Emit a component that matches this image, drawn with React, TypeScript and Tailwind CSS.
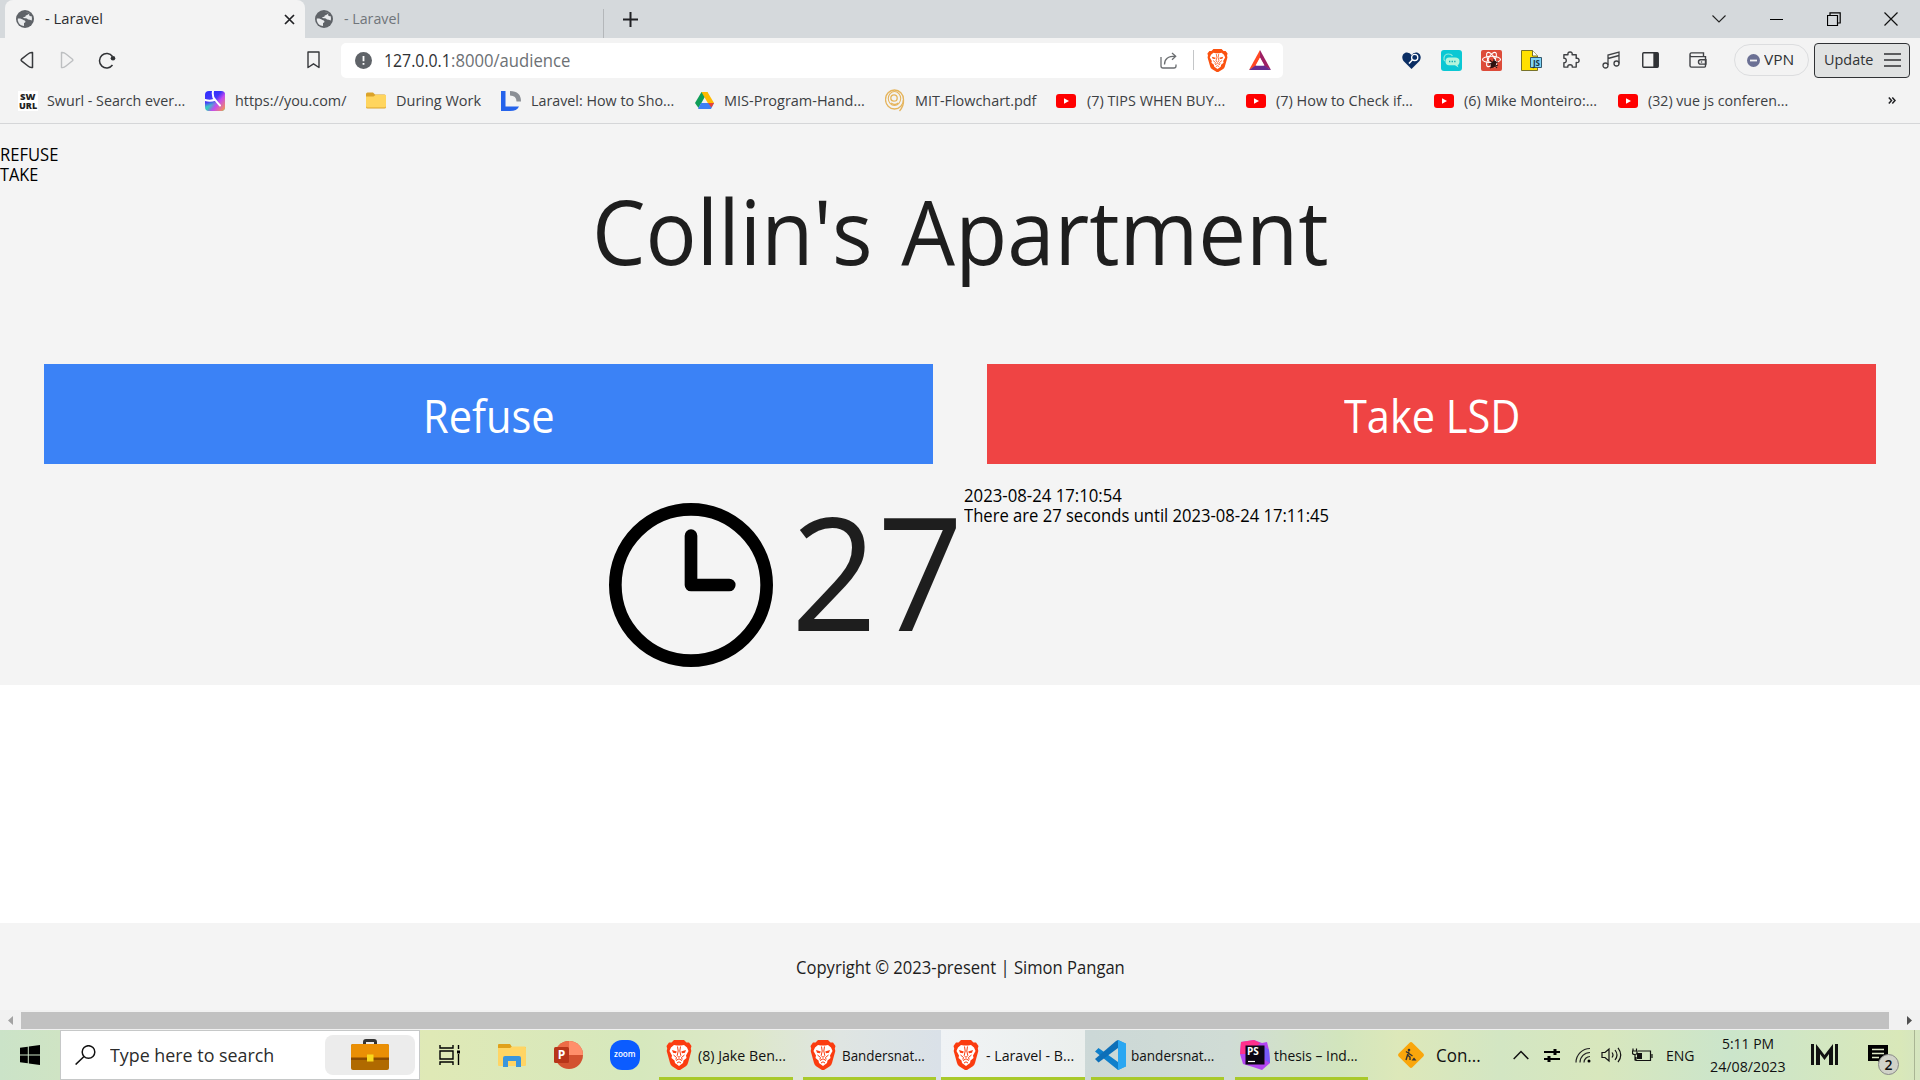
import { useLayoutEffect, useRef, useState, type ReactNode } from 'react';

/** Single line of text that is condensed or widened to the width of its box. */
function Fit({ className, children }: { className: string; children: string }) {
  const box = useRef<HTMLSpanElement>(null);
  const text = useRef<HTMLSpanElement>(null);
  const [scale, setScale] = useState(1);
  useLayoutEffect(() => {
    if (box.current && text.current) setScale(box.current.offsetWidth / text.current.offsetWidth);
  }, []);
  return (
    <span ref={box} className={`block shrink-0 whitespace-nowrap ${className}`}>
      <span ref={text} className="inline-block origin-left" style={{ transform: `scaleX(${scale})` }}>
        {children}
      </span>
    </span>
  );
}

function Svg({ className, box = '0 0 24 24', children }: { className: string; box?: string; children: ReactNode }) {
  return (
    <svg className={`block shrink-0 ${className}`} viewBox={box} preserveAspectRatio="none" fill="none" stroke="none">
      {children}
    </svg>
  );
}

function Brave({ className }: { className: string }) {
  return (
    <Svg className={className} box="0 0 26 30">
      <path d="M8 0H18L20.500 2.500H23L25.500 6L24.800 8.500L25.300 11L22 23Q21.500 25 19.500 26.500L14 30H12L6.500 26.500Q4.500 25 4 23L.7 11L1.200 8.500L.5 6L3 2.500H5.500Z" fill="currentColor" />
      <path d="M8 5L11 5.600H15L18 5L21 7.500L22.500 11L20 15.500L20.500 18L17.500 20.500L17 23L13 26L9 23L8.500 20.500L5.500 18L6 15.500L3.500 11L5 7.500Z" fill="#fff" />
      <path d="M6 10L10.800 11.500L10 13.200L7 12.800ZM20 10L15.200 11.500L16 13.200L19 12.800Z" fill="currentColor" />
      <path d="M11.500 6.500L12.200 11L11.200 15.500L13 17.500L14.800 15.500L13.800 11L14.500 6.500M7.500 15L10.500 17.500L9.800 19.500M18.500 15L15.500 17.500L16.200 19.500M10 20.500L13 18.800L16 20.500M11 23L13 21.800L15 23" stroke="currentColor" strokeWidth="1" />
    </Svg>
  );
}

function Globe({ className }: { className: string }) {
  return (
    <Svg className={className} box="0 0 18 18">
      <circle cx="9" cy="9" r="9" fill="#5f6368" />
      <path d="M1.800 8.500C4 8.200 6.500 9 7.500 10Q9 10 9.500 11.500Q9.500 12.800 8 13V16Q3 15.500 1.800 10.500Z" fill="#e9ebed" />
      <path d="M9.500 1.900Q12 2.200 13.500 3.300Q12 5 10.500 5.200Q9.500 5.300 9.500 6.500Q8.500 7 7 7.200Q7.500 8.300 9 8.200Q11 8 12 9.500Q13.500 9.500 15.800 10.500Q16.500 8.500 15.500 6Q13.500 6.500 13 5L13.500 3.300Q11.500 1.900 9.500 1.900Z" fill="#e9ebed" />
    </Svg>
  );
}

function YouTube({ className = '' }: { className?: string }) {
  return (
    <Svg className={`h-[14px] w-5 ${className}`} box="0 0 20 14">
      <rect width="20" height="14" rx="3" fill="#f00" />
      <path d="M8 4.200L13 7L8 9.800Z" fill="#fff" />
    </Svg>
  );
}

function TabStrip() {
  return (
    <div className="flex h-[38px] items-end bg-[#d5d9dc] pl-[5px] text-[15px] leading-5">
      <div className="flex h-[38px] w-[300px] items-center rounded-t-lg bg-[#f3f3f3] pl-[11px]">
        <Globe className="size-[18px]" />
        <Fit className="ml-[11px] w-[58px] -translate-y-px text-[#2b2d30]">- Laravel</Fit>
        <Svg className="ml-[181px] size-[11px]" box="0 0 11 11">
          <path d="M1 1L10 10M10 1L1 10" stroke="#202124" strokeWidth="1.700" />
        </Svg>
      </div>
      <div className="flex h-[38px] w-[298px] items-center pl-[10px]">
        <Globe className="size-[18px]" />
        <Fit className="ml-[11px] w-14 -translate-y-px text-[#70757a]">- Laravel</Fit>
      </div>
      <div className="h-[29px] w-px bg-[#b4b7ba]" />
      <div className="flex h-[38px] flex-1 items-center">
        <Svg className="ml-[19px] size-[15px]" box="0 0 15 15">
          <path d="M7.500 0V15M0 7.500H15" stroke="#202124" strokeWidth="2" />
        </Svg>
        <Svg className="ml-[1074px] h-2 w-[14px]" box="0 0 14 8">
          <path d="M.5 .5L7 7L13.500 .5" stroke="#222" strokeWidth="1.100" />
        </Svg>
        <div className="ml-[44px] h-px w-[13px] bg-black" />
        <Svg className="ml-[44px] size-[14px]" box="0 0 14 14">
          <path d="M.5 3.500H10.500V13.500H.5ZM3 3.500V.8H13.200V11H10.500" stroke="#000" strokeWidth="1.200" />
        </Svg>
        <Svg className="ml-[43px] size-[14px]" box="0 0 14 14">
          <path d="M.5 .5L13.500 13.500M13.500 .5L.5 13.500" stroke="#111" strokeWidth="1.200" />
        </Svg>
      </div>
    </div>
  );
}

function Toolbar() {
  return (
    <div className="flex h-[45px] items-center pb-px pl-5">
      <Svg className="h-[18px] w-[14px]" box="0 0 14 18">
        <path d="M12.500 1.500V16.500Q10 17 8 15L1.500 9.800Q.8 9 1.500 8.200L8 3Q10 1.200 12.500 1.500Z" stroke="#37393c" strokeWidth="1.500" strokeLinejoin="round" />
      </Svg>
      <Svg className="ml-[26px] h-[18px] w-[14px]" box="0 0 14 18">
        <path d="M1.500 1.500V16.500Q4 17 6 15L12.500 9.800Q13.200 9 12.500 8.200L6 3Q4 1.200 1.500 1.500Z" stroke="#bdbfc1" strokeWidth="1.400" strokeLinejoin="round" />
      </Svg>
      <Svg className="ml-[24px] h-[17px] w-[18px]" box="0 0 18 17">
        <path d="M14.500 13A7.200 7.200 0 1 1 14.500 4.500" stroke="#303235" strokeWidth="1.500" />
        <circle cx="15" cy="6.300" r="2.300" fill="#303235" />
      </Svg>
      <Svg className="ml-[191px] h-[18px] w-[13px]" box="0 0 13 18">
        <path d="M1 1H12V16.500L6.500 12.800L1 16.500Z" stroke="#35373a" strokeWidth="1.400" strokeLinejoin="round" />
      </Svg>
      <div className="ml-[21px] flex h-[35px] w-[942px] items-center rounded-[5px] bg-white pl-[14px]">
        <Svg className="size-[17px]" box="0 0 17 17">
          <circle cx="8.500" cy="8.500" r="8.500" fill="#5f6368" />
          <path d="M8.500 4V9.200M8.500 11V12.800" stroke="#fff" strokeWidth="1.800" />
        </Svg>
        <span className="ml-[12px] flex text-[17.500px] leading-6">
          <Fit className="w-[67px] text-[#303235]">127.0.0.1</Fit>
          <Fit className="w-[119px] text-[#6d7175]">:8000/audience</Fit>
        </span>
        <Svg className="ml-[590px] h-[17px] w-[17px]" box="0 0 17 17">
          <path d="M1 5V14Q1 16 3 16H14Q16 16 16 14V12.500M4.500 12.500C4.500 7 8 4.200 15.500 4.200M12 1L15.700 4.200L12 7.800" stroke="#6b6e71" strokeWidth="1.300" />
        </Svg>
        <div className="ml-4 h-5 w-px bg-[#c4c6c8]" />
        <Brave className="ml-[13px] h-[23px] w-[21px] text-[#fb5210]" />
        <Svg className="ml-[21px] h-5 w-[22px]" box="0 0 22 20">
          <path d="M11 0L0 20L7 16L11 8Z" fill="#ff4724" />
          <path d="M11 0L22 20L15 16L11 8Z" fill="#9e1f63" />
          <path d="M0 20L6.500 15.500H15.500L22 20Z" fill="#662d91" />
          <path d="M11 7.500L6.500 15.500H15.500Z" fill="#fff" />
        </Svg>
      </div>
      <Svg className="ml-[119px] h-[17px] w-[19px]" box="0 0 19 17">
        <path d="M9.500 17L1.500 9C-1 6 .5 .5 5 .5Q8 .5 9.500 3Q11 .5 14 .5C18.500 .5 20 6 17.500 9Z" fill="#0a2d63" />
        <circle cx="12.700" cy="5.400" r="3.100" stroke="#fff" strokeWidth="1.300" />
        <path d="M10.500 7.800L7 11.500" stroke="#fff" strokeWidth="1.500" />
      </Svg>
      <Svg className="ml-5 size-[21px]" box="0 0 21 21">
        <rect width="21" height="21" rx="3" fill="#0bc8d4" />
        <path d="M4 11Q2.500 10 3 8Q3.500 4 7.500 4Q10.500 4 11.500 6" stroke="#8be7dc" strokeWidth="1.200" />
        <path d="M8 7.500H14Q18.500 7.500 18.500 11.200Q18.500 14.500 16.500 15L17.500 17.500L14 15.300H8Q4.500 15 4.500 11.500Q4.500 7.500 8 7.500Z" fill="#b4f5dc" />
        <path d="M8 11.500H15" stroke="#0aa9b4" strokeWidth="1.300" strokeDasharray="1.300 1.300" />
      </Svg>
      <Svg className="ml-[19px] size-[21px]" box="0 0 21 21">
        <rect width="21" height="21" rx="2" fill="#dd4b39" />
        <ellipse cx="10.500" cy="9.500" rx="9" ry="3.300" stroke="#fff" strokeWidth="1.100" />
        <ellipse cx="10.500" cy="9.500" rx="8" ry="3.300" stroke="#fff" strokeWidth="1.100" transform="rotate(60 10.500 9.500)" />
        <ellipse cx="10.500" cy="9.500" rx="8" ry="3.300" stroke="#fff" strokeWidth="1.100" transform="rotate(120 10.500 9.500)" />
        <path d="M9 10L16 18M8 14L17 12M9 18L17 15M13 9V12" stroke="#2a1110" strokeWidth="1.100" />
        <ellipse cx="12.500" cy="14" rx="2.400" ry="3.800" fill="#2a1110" transform="rotate(30 12.500 14)" />
      </Svg>
      <span className="relative ml-[19px] block h-[21px] w-[21px] shrink-0">
        <Svg className="size-[21px]" box="0 0 21 21">
          <path d="M.5 .5H11.500L16.500 6V20.500H.5Z" fill="#ffe000" stroke="#77722a" />
          <path d="M11.500 .5V6H16.500" fill="#fff" stroke="#77722a" />
          <path d="M9.500 7.500H20.500V17.500H9.500Z" fill="#7fd3f7" stroke="#34576b" />
        </Svg>
        <span className="absolute top-[7px] left-[10px] w-[11px] text-center text-[8px] leading-[11px] font-bold text-[#153446]">JS</span>
      </span>
      <Svg className="ml-[20px] h-[18px] w-[18px]" box="0 0 19 19">
        <path d="M2 4H6.300Q5.800 1 8.500 1Q11.200 1 10.700 4H15V7.800Q18 7.300 18 10Q18 12.700 15 12.200V17H10.800Q11.200 14.500 8.500 14.500Q5.800 14.500 6.200 17H2V12.400Q4.500 12.500 4.500 10Q4.500 7.500 2 7.600Z" stroke="#3f4144" strokeWidth="1.500" strokeLinejoin="round" />
      </Svg>
      <Svg className="ml-[22px] h-[18px] w-[18px]" box="0 0 18 18">
        <path d="M6 14V4L17 1V12.500M6 7.500L17 4.500" stroke="#3f4144" strokeWidth="1.300" />
        <circle cx="3.500" cy="14.500" r="2.500" stroke="#3f4144" strokeWidth="1.300" />
        <circle cx="14.500" cy="12.500" r="2.500" stroke="#3f4144" strokeWidth="1.300" />
      </Svg>
      <Svg className="ml-[22px] h-4 w-[17px]" box="0 0 18 17">
        <rect x=".8" y=".8" width="16.400" height="15.400" rx="1" stroke="#303235" strokeWidth="1.500" />
        <path d="M12 1H17V16H12Z" fill="#303235" />
      </Svg>
      <Svg className="ml-[30px] h-4 w-[18px]" box="0 0 18 17">
        <path d="M1 3V14.500Q1 16 2.500 16H15.500Q16.500 16 16.500 15V5H2.500Q1 5 1 3Q1 1 2.500 1H14.500V5M17 8.200H11.500Q9.500 8.200 9.500 10.500Q9.500 12.800 11.500 12.800H17Z" stroke="#3f4144" strokeWidth="1.400" />
        <circle cx="12.500" cy="10.500" r=".8" fill="#3f4144" />
      </Svg>
      <div className="ml-[27px] flex h-8 w-[75px] items-center rounded-full border border-[#dcdddf] pl-3">
        <Svg className="size-[13px]" box="0 0 13 13">
          <circle cx="6.500" cy="6.500" r="6.500" fill="#6b7094" />
          <path d="M3 6.500H10" stroke="#f3f3f3" strokeWidth="1.800" />
        </Svg>
        <Fit className="ml-1 w-[30px] -translate-y-px text-[15px] text-[#303235]">VPN</Fit>
      </div>
      <div className="ml-[5px] flex h-[35px] w-24 items-center rounded-[4px] border border-[#303235] bg-[#e0e2e2] pl-[9px]">
        <Fit className="w-[49px] -translate-y-px text-[15px] text-[#303235]">Update</Fit>
        <Svg className="ml-[11px] h-[14px] w-[17px]" box="0 0 17 14">
          <path d="M0 1H17M0 7H17M0 13H17" stroke="#303235" strokeWidth="1.400" />
        </Svg>
      </div>
    </div>
  );
}

function BookmarkBar() {
  return (
    <div className="flex h-[41px] items-center border-b border-[#d5d6d8] pb-[5px] pl-[18px] text-[15px] leading-5 text-[#3c4043]">
      <span className="flex h-5 w-5 flex-col items-center justify-center bg-white text-[9px] leading-[9px] font-extrabold text-[#222]">
        <Fit className="w-4">SW</Fit>
        <Fit className="w-[18px]">URL</Fit>
      </span>
      <Fit className="ml-[9px] w-[138px] -translate-y-px">Swurl - Search ever...</Fit>
      <Svg className="ml-5 size-5" box="0 0 20 20">
        <defs>
          <linearGradient id="you" x1="0" y1="0" x2="0.300" y2="1">
            <stop offset="0" stopColor="#2b2bff" />
            <stop offset=".55" stopColor="#4a3cf5" />
            <stop offset=".75" stopColor="#3fc3c9" />
            <stop offset="1" stopColor="#25d6b0" />
          </linearGradient>
          <linearGradient id="youWarm" x1="0" y1="0.200" x2="1" y2="1">
            <stop offset=".4" stopColor="#b63cf5" stopOpacity="0" />
            <stop offset=".6" stopColor="#c44af0" />
            <stop offset="1" stopColor="#ffa03c" />
          </linearGradient>
        </defs>
        <rect width="20" height="20" rx="4" fill="url(#you)" />
        <rect width="20" height="20" rx="4" fill="url(#youWarm)" />
        <path d="M8 0Q7 6 10 8.500Q12.500 12 15 14.500M0 9Q6 10.500 10 8.500" stroke="#fff" strokeWidth="2" strokeLinecap="round" />
      </Svg>
      <Fit className="ml-[10px] w-[111px] -translate-y-px">https://you.com/</Fit>
      <Svg className="ml-5 h-[17px] w-5" box="0 0 20 17">
        <path d="M0 2Q0 .5 1.500 .5H7L9 2.500H18.500Q20 2.500 20 4V15Q20 16.500 18.500 16.500H1.500Q0 16.500 0 15Z" fill="#dba32a" />
        <path d="M0 4.500H7.500L9.500 3H20V14Q20 15.500 18.500 15.500H1.500Q0 15.500 0 14Z" fill="#ffd55e" />
      </Svg>
      <Fit className="ml-[10px] w-[85px] -translate-y-px">During Work</Fit>
      <Svg className="ml-5 size-5" box="0 0 20 20">
        <path d="M0 0H4.500V15.500H18Q16 20 9 20H0Z" fill="#2563eb" />
        <path d="M9 0Q20 0 20 10.500H15.500Q15.500 4.500 9 4.500Z" fill="#8b8f95" />
      </Svg>
      <Fit className="ml-[10px] w-[143px] -translate-y-px">Laravel: How to Sho...</Fit>
      <Svg className="ml-[21px] h-[17px] w-[19px]" box="0 0 19 17">
        <path d="M6.500 0H12.500L9.500 5.500L3.500 16L0 11Z" fill="#0f9d58" />
        <path d="M6.500 0H12.500L19 11H12.800Z" fill="#ffba00" />
        <path d="M6 11H19L16 17H3Z" fill="#3d7ff5" />
        <path d="M13 11H19L16.500 15.500Z" fill="#ea4335" />
      </Svg>
      <Fit className="ml-[10px] w-[141px] -translate-y-px">MIS-Program-Hand...</Fit>
      <Svg className="ml-5 h-[23px] w-5" box="0 0 20 23">
        <ellipse cx="9.500" cy="10.500" rx="9" ry="9.500" stroke="#e5b45c" strokeWidth="1.300" />
        <ellipse cx="9.500" cy="9.500" rx="6.200" ry="7" stroke="#e5b45c" strokeWidth="1.100" />
        <circle cx="9" cy="9" r="3.200" stroke="#e5b45c" strokeWidth="1.300" />
        <path d="M6 14Q10 17 13 14M18.500 11Q19 17 14.500 22" stroke="#e5b45c" strokeWidth="1.300" />
      </Svg>
      <Fit className="ml-[10px] w-[121px] -translate-y-px">MIT-Flowchart.pdf</Fit>
      <YouTube className="ml-5" />
      <Fit className="ml-[11px] w-[138px] -translate-y-px">(7) TIPS WHEN BUY...</Fit>
      <YouTube className="ml-[21px]" />
      <Fit className="ml-[10px] w-[137px] -translate-y-px">(7) How to Check if...</Fit>
      <YouTube className="ml-[21px]" />
      <Fit className="ml-[10px] w-[133px] -translate-y-px">(6) Mike Monteiro:...</Fit>
      <YouTube className="ml-[21px]" />
      <Fit className="ml-[10px] w-[140px] -translate-y-px">(32) vue js conferen...</Fit>
      <Svg className="ml-[100px] h-[7px] w-2" box="0 0 8 7">
        <path d="M.8 .5L3.500 3.500L.8 6.500M4.300 .5L7 3.500L4.300 6.500" stroke="#202124" strokeWidth="1.500" />
      </Svg>
    </div>
  );
}

function Page() {
  return (
    <div className="flex h-[886px] flex-col bg-white text-[18px] leading-5 text-black">
      <main className="h-[561px] bg-[#f4f4f4] pt-5">
        <Fit className="w-[58px]">REFUSE</Fit>
        <Fit className="w-[38px]">TAKE</Fit>
        <h1 className="-mt-[3px] flex justify-center text-[89px] leading-[100px] text-[#1e1e1e] [word-spacing:7px]">
          <Fit className="w-[737px]">Collin's Apartment</Fit>
        </h1>
        <div className="mt-[83px] grid grid-cols-2 gap-[54px] px-[44px] text-[46px] leading-[100px] text-white">
          <button className="flex h-[100px] justify-center bg-[#3b82f6] pt-px">
            <Fit className="w-[132px]">Refuse</Fit>
          </button>
          <button className="flex h-[100px] justify-center bg-[#ef4444] pt-px">
            <Fit className="w-[176px]">Take LSD</Fit>
          </button>
        </div>
        <div className="flex pt-[21px] pl-[609px]">
          <Svg className="mt-[18px] size-[164px]" box="0 0 163 163">
            <circle cx="81.500" cy="81.500" r="75.200" stroke="#000" strokeWidth="12.600" />
            <path d="M81.500 32.500V81.500H119.500" stroke="#000" strokeWidth="12.600" strokeLinecap="round" strokeLinejoin="round" />
          </Svg>
          <Fit className="-mt-[5px] ml-[18px] h-[180px] w-[173px] text-[157px] leading-[180px] text-[#1e1e1e]">27</Fit>
          <div>
            <Fit className="w-[158px]">2023-08-24 17:10:54</Fit>
            <Fit className="w-[365px]">There are 27 seconds until 2023-08-24 17:11:45</Fit>
          </div>
        </div>
      </main>
      <footer className="mt-auto flex h-[87px] justify-center bg-[#f4f4f4] pt-[34px] text-[#1e1e1e]">
        <Fit className="w-[329px]">Copyright © 2023-present | Simon Pangan</Fit>
      </footer>
    </div>
  );
}

function ScrollBar() {
  return (
    <div className="flex h-5 items-center bg-[#f1f1f1] pl-2">
      <Svg className="h-[9px] w-[5px]" box="0 0 5 9">
        <path d="M5 0V9L0 4.500Z" fill="#a3a3a3" />
      </Svg>
      <div className="ml-2 h-[17px] w-[1868px] bg-[#c1c1c1]" />
      <Svg className="ml-[18px] h-[9px] w-[5px]" box="0 0 5 9">
        <path d="M0 0V9L5 4.500Z" fill="#505050" />
      </Svg>
    </div>
  );
}

function Task({ className, children }: { className: string; children: ReactNode }) {
  return (
    <div className={`flex h-[50px] shrink-0 items-center border-b-[3px] border-[#a9c92b] pt-[3px] ${className}`}>{children}</div>
  );
}

function Taskbar() {
  return (
    <div className="flex h-[50px] items-center bg-[linear-gradient(90deg,#cbe3c8_0px,#cfe4c4_60px,#dfe9b6_430px,#d6e8bd_640px,#dde8c8_740px,#dfe5e2_840px,#dae1e8_940px,#ccd8d7_1090px,#d0dcd5_1230px,#d2e5bd_1340px,#dde8b9_1400px,#d3e6c3_1500px,#d8e7bd_1600px,#cbe5cb_1730px,#d9e8b9_1900px,#d5e5c0_1920px)] text-[15px] leading-5 text-[#111]">
      <Svg className="ml-5 h-5 w-5" box="0 0 20 20">
        <path d="M0 2.800L7.800 1.700V9.500H0ZM8.800 1.500L20 0V9.500H8.800ZM0 10.500H7.800V18.300L0 17.200ZM8.800 10.500H20V20L8.800 18.500Z" fill="#000" />
      </Svg>
      <div className="ml-5 flex h-[50px] w-[360px] items-center border border-[#c6c8c8] bg-white pl-[14px]">
        <Svg className="h-5 w-[21px]" box="0 0 21 20">
          <circle cx="13.500" cy="7" r="6.300" stroke="#111" strokeWidth="1.500" />
          <path d="M9 11.500L.6 19.500" stroke="#111" strokeWidth="1.600" />
        </Svg>
        <Fit className="ml-[14px] w-[164px] text-[18.500px] text-[#2b2b2b]">Type here to search</Fit>
        <div className="ml-[51px] flex h-10 w-[90px] justify-center rounded-lg bg-[#ececec] pt-[4px]">
          <Svg className="h-[31px] w-[38px]" box="0 0 38 31">
            <path d="M13.500 6V3Q13.500 1.500 15 1.500H23Q24.500 1.500 24.500 3V6" stroke="#333" strokeWidth="3" />
            <rect y="5" width="38" height="26" rx="2" fill="#b06a00" />
            <path d="M0 7Q0 5 2 5H36Q38 5 38 7V19H0Z" fill="#ea8f05" />
            <path d="M0 18.500H38V21H0Z" fill="#8a4b00" />
            <rect x="16" y="15.500" width="6.500" height="7" fill="#f9d71c" />
          </Svg>
        </div>
      </div>
      <Svg className="ml-[19px] h-5 w-[21px]" box="0 0 21 20">
        <path d="M1 0V3H14V0M1 6H14V14H1ZM1 20V17H14V20M19.500 0V4M19.500 9V20" stroke="#000" strokeWidth="1.400" />
        <path d="M18 5.500H21V8.500H18Z" fill="#000" />
      </Svg>
      <Svg className="ml-[38px] h-[23px] w-7" box="0 0 28 23">
        <path d="M0 1Q0 0 1 0H12L14 3H28V10H0Z" fill="#e0a11a" />
        <path d="M0 4H12L14 2.500H27Q28 2.500 28 4V21Q28 22 27 22H1Q0 22 0 21Z" fill="#ffd564" />
        <path d="M5 23V14Q5 12 7 12H21Q23 12 23 14V23H18V17H10V23Z" fill="#3a96dd" />
      </Svg>
      <span className="relative ml-[28px] block h-7 w-[29px] shrink-0">
        <Svg className="h-7 w-[29px]" box="0 0 29 28">
          <circle cx="15" cy="14" r="14" fill="#d35230" />
          <path d="M15 0A14 14 0 0 1 29 14H15Z" fill="#ff8f6b" />
          <path d="M15 0A14 14 0 0 0 1 14H15Z" fill="#ed6c47" />
          <rect y="6" width="15" height="16" rx="1.500" fill="#b83519" />
        </Svg>
        <span className="absolute top-[6px] left-0 w-[15px] text-center text-[12px] leading-4 font-bold text-white">P</span>
      </span>
      <div className="ml-[27px] flex size-[30px] shrink-0 items-center justify-center rounded-[12px] bg-[#0b5cff] text-[8.500px] font-semibold text-white">
        <Fit className="w-[22px] -translate-y-px">zoom</Fit>
      </div>
      <Task className="ml-[19px] w-[134px] pl-[7px]">
        <Brave className="h-[30px] w-[26px] text-[#fb3c10]" />
        <Fit className="ml-[6px] w-[88px]">(8) Jake Ben...</Fit>
      </Task>
      <Task className="ml-[10px] w-[133px] pl-[7px]">
        <Brave className="h-[30px] w-[26px] text-[#fb3c10]" />
        <Fit className="ml-[6px] w-[83px]">Bandersnat...</Fit>
      </Task>
      <Task className="ml-[5px] w-[144px] bg-linear-to-r from-[#f0f3f5] to-[#ebefed] pl-[12px]">
        <Brave className="h-[30px] w-[26px] text-[#fb3c10]" />
        <Fit className="ml-[7px] w-[88px]">- Laravel - B...</Fit>
      </Task>
      <Task className="ml-[6px] w-[133px] pl-[4px]">
        <Svg className="h-[30px] w-[31px]" box="0 0 31 30">
          <path d="M23 0L31 4V26L23 30L0 11.500L3.500 8L23 22Z" fill="#0e7fcb" />
          <path d="M23 8L3.500 22.500L0 19L21 1L23 0Z" fill="#0d6fb8" />
          <path d="M23 0L31 3.500V26.500L23 30Z" fill="#2aa7f2" />
        </Svg>
        <Fit className="ml-[5px] w-[83px]">bandersnat...</Fit>
      </Task>
      <Task className="ml-[11px] w-[133px] pl-[5px]">
        <span className="relative block h-[30px] w-[30px] shrink-0">
          <Svg className="size-[30px]" box="0 0 30 30">
            <path d="M1 2L14 0L22 3L27 2L29 10L30 23L22 30L13 27L3 24L0 14Z" fill="#b345f1" />
            <path d="M1 2L14 0L20 3L10 14L0 14Z" fill="#ff318c" />
            <path d="M22 5L29 10L30 23L25 20Z" fill="#765af8" />
            <rect x="5.500" y="5.500" width="19" height="19" fill="#0b0614" />
            <path d="M8 21.500H15" stroke="#fff" strokeWidth="1.200" />
          </Svg>
          <span className="absolute top-[6px] left-[7px] text-[10px] leading-[11px] font-bold text-white">PS</span>
        </span>
        <Fit className="ml-[4px] w-[84px]">thesis – Ind...</Fit>
      </Task>
      <Svg className="ml-[29px] h-7 w-7" box="0 0 28 28">
        <rect x="4.300" y="4.300" width="19.400" height="19.400" rx="2" fill="#f9a60c" transform="rotate(45 14 14)" />
        <circle cx="12" cy="9" r="1.300" fill="#333" />
        <path d="M12 10.500L10.500 14L13 16V19M10.500 14L9 19M9 10.500L15.500 15" stroke="#333" strokeWidth="1.400" />
        <path d="M14.500 19.500L17 16.500L19.500 19.500Z" fill="#333" />
      </Svg>
      <Fit className="ml-[11px] w-[45px] text-[18.500px]">Con...</Fit>
      <Svg className="ml-[32px] h-[10px] w-4" box="0 0 16 10">
        <path d="M.7 9L8 1.500L15.300 9" stroke="#111" strokeWidth="1.500" />
      </Svg>
      <Svg className="ml-[14px] h-[15px] w-[18px]" box="0 0 18 15">
        <path d="M1 4H17M1 11H17" stroke="#000" strokeWidth="2" />
        <path d="M10.500 1H13.500V7H10.500Z" fill="#000" />
        <path d="M4.500 8H7.500V14H4.500Z" fill="#000" />
      </Svg>
      <Svg className="ml-[14px] h-4 w-4" box="0 0 16 16">
        <path d="M1 15.500A14 14 0 0 1 15 1.500M5 15.500A10 10 0 0 1 15 5.500M9 15.500A6 6 0 0 1 15 9.500" stroke="#222" strokeWidth="1.200" />
        <circle cx="14" cy="14" r="1.500" fill="#000" />
      </Svg>
      <Svg className="ml-[10px] h-4 w-[22px]" box="0 0 22 16">
        <path d="M1 5.500H4L8 2V14L4 10.500H1ZM11 5.500Q13 8 11 10.500M14 3Q18 8 14 13M17 .8Q22.500 8 17 15.200" stroke="#111" strokeWidth="1.200" />
      </Svg>
      <Svg className="ml-[9px] h-[14px] w-[21px]" box="0 0 21 14">
        <path d="M6 3H18.500V12.500H4V9M20 6V10M1 .5V3M4.500 .5V3M.5 3H5V5Q5 6.500 3 6.500Q.5 6.500 .5 5ZM3 6.500V12.500" stroke="#111" strokeWidth="1.200" />
        <path d="M5 5H10V11H5Z" fill="#111" />
      </Svg>
      <Fit className="ml-[13px] w-[29px]">ENG</Fit>
      <div className="ml-[15px] flex w-[76px] -translate-y-px flex-col items-center gap-[3px]">
        <Fit className="w-[52px]">5:11 PM</Fit>
        <Fit className="w-[76px]">24/08/2023</Fit>
      </div>
      <Svg className="ml-[25px] h-[21px] w-[27px] -translate-y-px" box="0 0 27 21">
        <path d="M0 0H3V21H0ZM24 0H27V21H24ZM5 21V0L13.500 11L22 0V21H18V10L13.500 16L9 10V21Z" fill="#111" />
      </Svg>
      <span className="relative ml-[30px] block h-[30px] w-[32px] shrink-0">
        <Svg className="mt-[5px] h-[20px] w-5" box="0 0 20 20">
          <path d="M0 0H20V16H14V20L10 16H0Z" fill="#000" />
          <path d="M4 4.500H16M4 8.500H16M4 12.500H11" stroke="#dfe9c8" strokeWidth="1.300" />
        </Svg>
        <span className="absolute top-[14px] left-[10px] flex size-[21px] items-center justify-center rounded-full border border-[#888] bg-[#d0d2c8] text-[14px] font-semibold">2</span>
      </span>
      <div className="ml-[14px] h-[50px] w-px bg-[#a9b594]" />
    </div>
  );
}

export default function App() {
  return (
    <div className="flex h-[1080px] w-[1920px] flex-col overflow-hidden bg-[#f3f3f3] font-['Open_Sans','Noto_Sans',sans-serif]">
      <TabStrip />
      <Toolbar />
      <BookmarkBar />
      <Page />
      <ScrollBar />
      <Taskbar />
    </div>
  );
}
